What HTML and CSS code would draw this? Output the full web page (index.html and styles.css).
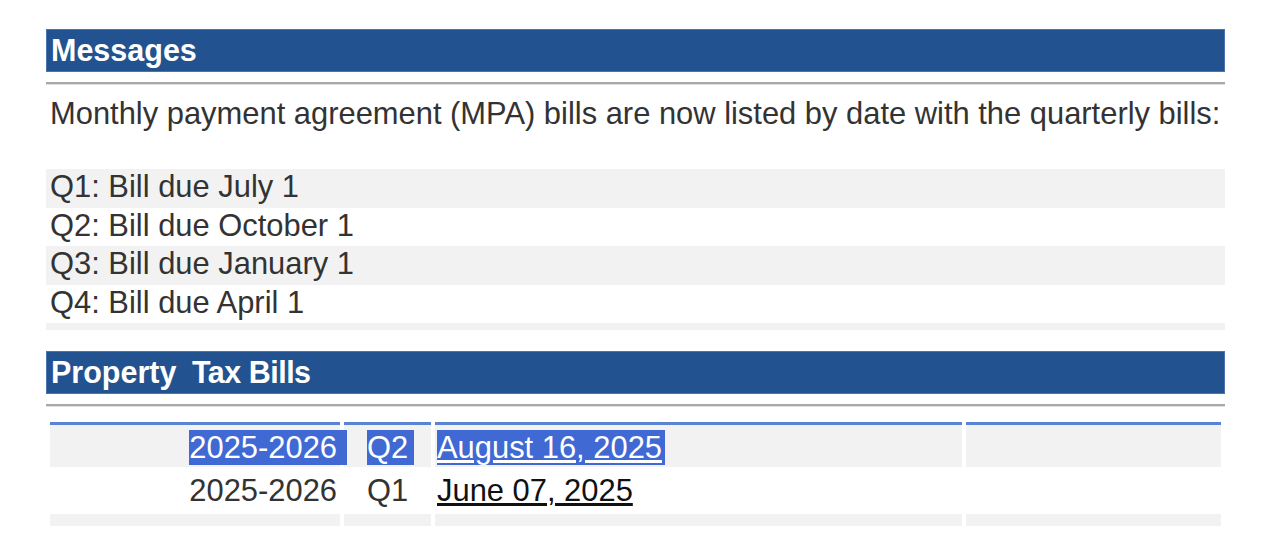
FILE: index.html
```html
<!DOCTYPE html>
<html lang="en">
<head>
<meta charset="utf-8">
<title>Messages</title>
<link rel="stylesheet" href="styles.css">
</head>
<body>
<div class="page">
  <div class="section-title">Messages</div>
  <div class="rule"></div>
  <p class="intro">Monthly payment agreement (MPA) bills are now listed by date with the quarterly bills:</p>
  <div class="qlist">
    <div class="qrow alt">Q1: Bill due July 1</div>
    <div class="qrow">Q2: Bill due October 1</div>
    <div class="qrow alt">Q3: Bill due January 1</div>
    <div class="qrow">Q4: Bill due April 1</div>
    <div class="qend"></div>
  </div>

  <div class="section-title second">Property <span class="tight">Tax Bills</span></div>
  <div class="rule"></div>
  <table class="bills">
    <colgroup>
      <col class="c-year">
      <col class="c-q">
      <col class="c-date">
      <col class="c-extra">
    </colgroup>
    <tr class="bar"><td></td><td></td><td></td><td></td></tr>
    <tr class="row1">
      <td class="year"><span class="sel sel-year">2025-2026</span></td>
      <td class="q"><span class="sel sel-q">Q2</span></td>
      <td class="date"><a href="#" class="sel sel-link">August 16, 2025</a></td>
      <td></td>
    </tr>
    <tr class="row2">
      <td class="year">2025-2026</td>
      <td class="q">Q1</td>
      <td class="date"><a href="#" class="link">June 07, 2025</a></td>
      <td></td>
    </tr>
    <tr class="rowend"><td></td><td></td><td></td><td></td></tr>
  </table>
</div>
</body>
</html>
```
FILE: styles.css
```css
html, body {
  margin: 0;
  padding: 0;
  background: #ffffff;
}

body {
  font-family: "Liberation Sans", Arial, sans-serif;
  font-size: 30.9px;
  color: #333333;
}

.page {
  width: 1179px;
  padding: 29px 0 0 46px;
}

.section-title {
  background: #22528f;
  color: #ffffff;
  font-weight: bold;
  font-size: 30.5px;
  height: 43px;
  box-sizing: border-box;
  padding: 3px 4px 0;
  border: 1px solid #4a74ad;
}

.section-title.second {
  margin-top: 21px;
  word-spacing: 7px;
}

.section-title .tight {
  word-spacing: 0;
  letter-spacing: -0.5px;
}

.rule {
  margin-top: 10px;
  height: 2px;
  background: #a8a8a8;
  border-bottom: 1px solid #e0e0e0;
}

.intro {
  margin: 11px 0 0;
  padding: 0 4px;
  line-height: 35px;
}

.qlist {
  margin-top: 38px;
}

.qrow {
  height: 38.6px;
  line-height: 35px;
  padding: 0 4px;
  box-sizing: border-box;
}

.qrow.alt {
  background: #f2f2f2;
}

.qend {
  height: 6.5px;
  background: #f2f2f2;
}

.bills {
  margin-top: 15px;
  width: 1179px;
  table-layout: fixed;
  border-collapse: separate;
  border-spacing: 4px 0;
  font-size: 30.9px;
  color: #333333;
}

.c-year { width: 290px; }
.c-q { width: 87px; }
.c-date { width: 527px; }
.c-extra { width: 255px; }

.bills td {
  padding: 0;
  vertical-align: top;
  line-height: 35px;
}

.bills .bar td {
  height: 3px;
  background: #5b83d3;
  line-height: 0;
  font-size: 0;
}

.bills .row1 td {
  height: 42px;
  box-sizing: border-box;
  padding-top: 5px;
  background: #f2f2f2;
}

.bills .row2 td {
  height: 47px;
  box-sizing: border-box;
  padding-top: 6px;
}

.bills .rowend td {
  height: 12px;
  background: #f2f2f2;
  font-size: 0;
  line-height: 0;
}

.bills td.year {
  text-align: right;
  padding-right: 3px;
}

.bills td.q {
  text-align: center;
}

.bills td.date {
  text-align: left;
  padding-left: 2px;
}

.sel {
  background: #4169d3;
  color: #ffffff;
}

.sel-year {
  padding-right: 10px;
  margin-right: -10px;
}

.sel-q {
  padding-right: 6px;
  margin-right: -6px;
}

.sel-link {
  text-decoration: underline;
  padding-right: 3px;
}

.link {
  color: #111111;
  text-decoration: underline;
}
```
